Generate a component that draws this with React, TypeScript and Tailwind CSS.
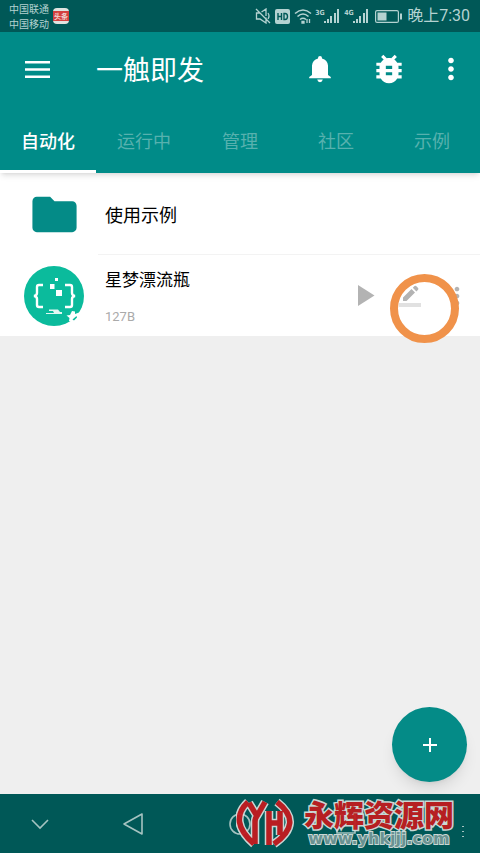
import { useState } from "react";
import { MdBugReport, MdFolder, MdMoreVert } from "react-icons/md";

const tabs = ["自动化", "运行中", "管理", "社区", "示例"];

function SignalIcon() {
  return (
    <svg width="16" height="16" viewBox="0 0 16 16" fill="currentColor">
      <path d="M0 13h2v2H0zM3 11h2v4H3zM6 8h2v7H6zM10 5h2v10h-2zM13 1h2v14h-2z" />
    </svg>
  );
}

function StatusBar() {
  return (
    <div className="flex h-8 items-center justify-between bg-[#005857] pl-[9px] pr-[10px] text-[#b4d2d1]">
      <div className="flex items-center gap-1">
        <div className="text-[10px] leading-[15px]">
          <p>中国联通</p>
          <p>中国移动</p>
        </div>
        <div className="flex h-4 w-4 items-center justify-center rounded-sm bg-[#dfe3e0]">
          <span className="w-4 bg-[#d4403f] text-center text-[7px] font-bold leading-[10px] text-[#f2d6d2]">
            头条
          </span>
        </div>
      </div>

      <div className="flex items-center">
        <svg width="16" height="16" viewBox="0 0 16 16" fill="none" stroke="currentColor" strokeWidth="1.3">
          <path d="M5 5H1.500v6H5l6 4V9.500M6.500 4L11 1v7M1 1l14 14M13 5q2 3 0 6" />
        </svg>
        <svg className="ml-1" width="15" height="15" viewBox="0 0 15 15">
          <rect width="15" height="15" rx="2" fill="currentColor" />
          <path
            d="M3 4v7M6.500 4v7M3 7.500h3.500M9 4.500v6h1q2.500 0 2.500-3t-2.500-3z"
            fill="none"
            stroke="#005857"
            strokeWidth="1.400"
          />
        </svg>
        <svg className="ml-1" width="18" height="16" viewBox="0 0 18 16" fill="none" stroke="currentColor" strokeWidth="1.600">
          <path d="M1 5.500q8-7 16 0M3.500 8.500q5.500-5 11 0M6 11.500q3-2.500 6 0" />
          <path d="M8 13.500h2v1.500H8zM13 11v4M15.500 11v4" strokeWidth="1.300" />
        </svg>
        <div className="ml-[3px] flex items-center">
          <span className="h-4 w-[9px] font-['DejaVu_Sans_Condensed',sans-serif] text-[7px] font-bold leading-[10px]">3G</span>
          <SignalIcon />
        </div>
        <div className="ml-1 flex items-center">
          <span className="h-4 w-[9px] font-['DejaVu_Sans_Condensed',sans-serif] text-[7px] font-bold leading-[10px]">4G</span>
          <SignalIcon />
        </div>
        <svg className="ml-[6px]" width="27" height="13" viewBox="0 0 27 13">
          <rect x=".6" y=".6" width="22.800" height="11.800" rx="1.500" fill="none" stroke="currentColor" strokeWidth="1.200" />
          <path d="M2.500 2.500h9v8h-9zM25 3.500h2v6h-2z" fill="currentColor" />
        </svg>
        <span className="ml-[5px] font-[Roboto,'Noto_Sans_CJK_SC',sans-serif] text-base leading-5">晚上7:30</span>
      </div>
    </div>
  );
}

function AppBar() {
  return (
    <div className="flex h-[74px] items-center pl-6 pr-3">
      <button type="button" aria-label="菜单">
        <svg width="27" height="19" viewBox="0 0 27 19" fill="currentColor">
          <path d="M1 1h25v2.500H1zM1 8.200h25v2.500H1zM1 15.400h25v2.500H1z" />
        </svg>
      </button>
      <h1 className="ml-[45px] flex-1 text-[27px] leading-9">一触即发</h1>
      <button type="button" aria-label="通知">
        <svg width="24" height="28" viewBox="0 0 24 28" fill="currentColor">
          <path d="M12 1a2 2 0 0 1 2 2v.5q5.500 1.500 6 7V20l2.800 2v1.200H1.200V22L4 20v-9.500q.5-5.500 6-7V3a2 2 0 0 1 2-2zM9.200 24.600h5.600q-.6 2.600-2.800 2.600t-2.800-2.600z" />
        </svg>
      </button>
      <button type="button" aria-label="日志" className="ml-[38px]">
        <MdBugReport size={38} />
      </button>
      <button type="button" aria-label="更多" className="ml-[26px]">
        <MdMoreVert size={34} />
      </button>
    </div>
  );
}

function ScriptIcon() {
  return (
    <svg width="60" height="60" viewBox="0 0 60 60">
      <circle cx="30" cy="30" r="30" fill="#0bbb9c" />
      <path
        d="M19 19h-4q-2 0-2 2v6q0 2.500-3 3 3 .5 3 3v6q0 2 2 2h4M41 19h5q2 0 2 2v6q0 2.500 3 3-3 .5-3 3v6q0 2-2 2h-5"
        fill="none"
        stroke="#fff"
        strokeWidth="2.400"
      />
      <path d="M31 12h3v3h-3zM26 18h4.500v5H26zM32 24h6v6h-6z" fill="#fff" />
      <path d="M25 43.500h9l2 2.500h2v2H22v-1h8l-1-2h-4z" fill="#e2f7f2" />
      <path
        d="M42.500 49.500l3.500-.5 2-4 3 .5v2.500l4-1.500L60 43v17H48v-4l-3-1 .5-3z"
        fill="#fff"
      />
      <path d="M48.500 53.500l4-3.500.500 1.500-3 3z" fill="#0bbb9c" />
    </svg>
  );
}

function ScriptList() {
  return (
    <ul className="bg-white text-black">
      <li className="flex h-[82px] items-center pl-6">
        <span className="flex w-[60px] justify-center">
          <MdFolder size={53} className="text-[#048b87]" />
        </span>
        <div className="ml-[14px] flex h-full flex-1 items-center border-b border-[#f3f3f3] pl-[7px] text-lg">
          使用示例
        </div>
      </li>
      <li className="relative flex h-[81px] items-center pl-6 pr-[9px]">
        <ScriptIcon />
        <div className="ml-[21px] flex-1">
          <p className="text-[17px] leading-6">星梦漂流瓶</p>
          <p className="mt-[18px] font-[Roboto,sans-serif] text-[13px] leading-4 text-[#aaa]">127B</p>
        </div>
        <button type="button" aria-label="运行" className="text-[#b3b3b3]">
          <svg width="18" height="22" viewBox="0 0 18 22" fill="currentColor">
            <path d="M1 0l16.500 10.500L1 21z" />
          </svg>
        </button>
        <button type="button" aria-label="编辑" className="ml-6">
          <svg width="24" height="24" viewBox="0 0 24 24">
            <path d="M4 13.500L12.500 5l3.500 3.500L7.500 17H4zM13.800 3.800l1.700-1.700q.8-.6 1.600 0l2 2q.6.800 0 1.600l-1.700 1.700z" fill="#b3b3b3" />
            <path d="M0 19h22v4H0z" fill="#e1e1e1" />
          </svg>
        </button>
        <button type="button" aria-label="更多操作" className="ml-5 text-[#b3b3b3]">
          <MdMoreVert size={28} />
        </button>
        <span className="pointer-events-none absolute right-[21px] top-[19px] z-10 h-[69px] w-[69px] rounded-full border-8 border-[#f0924a]" />
      </li>
    </ul>
  );
}

function Watermark() {
  const mark =
    "M12 5Q-8 24 18 47M13 6l8 13 8-14M21 19q-2 2-2 6v22M33 14v34M33 26h11M44 14v24M41 5Q68 26 38 47";

  return (
    <div className="pointer-events-none absolute bottom-1 right-[26px] flex items-center gap-2 opacity-95">
      <svg width="60" height="52" viewBox="0 0 60 52" fill="none" strokeLinejoin="round">
        <path d={mark} stroke="#d5dedc" strokeWidth="8.500" />
        <path d={mark} stroke="#c31b20" strokeWidth="5.500" />
      </svg>
      <div className="text-center">
        <p className="text-[30px] font-black leading-8 text-[#c01c20] [-webkit-text-stroke:3px_#d5dedc] [paint-order:stroke]">
          永辉资源网
        </p>
        <p className="font-['DejaVu_Sans',sans-serif] text-base font-bold leading-5 text-[#6f9695] [-webkit-text-stroke:2px_#d5dedc] [paint-order:stroke]">
          www.yhkjjj.com
        </p>
      </div>
    </div>
  );
}

function NavigationBar() {
  return (
    <nav className="relative flex h-[59px] items-center bg-[#005857] text-[#a5c3c1]">
      <button type="button" aria-label="隐藏" className="ml-[30px]">
        <svg width="20" height="12" viewBox="0 0 20 12" fill="none" stroke="currentColor" strokeWidth="1.600">
          <path d="M2 2l8 8 8-8" />
        </svg>
      </button>
      <button type="button" aria-label="返回" className="ml-[72px]">
        <svg width="22" height="24" viewBox="0 0 22 24" fill="none" stroke="currentColor" strokeWidth="1.600" strokeLinejoin="round">
          <path d="M20 2v20L2 12z" />
        </svg>
      </button>
      <button type="button" aria-label="主屏幕" className="ml-[84px]">
        <svg width="24" height="24" viewBox="0 0 24 24" fill="none" stroke="currentColor" strokeWidth="1.600">
          <circle cx="12" cy="12" r="10" />
        </svg>
      </button>
      <button type="button" aria-label="最近任务" className="ml-[84px]">
        <svg width="20" height="20" viewBox="0 0 20 20" fill="none" stroke="currentColor" strokeWidth="1.600">
          <path d="M1 1h18v18H1z" />
        </svg>
      </button>
      <button type="button" aria-label="选项" className="ml-auto mr-4 mt-4">
        <svg width="2" height="12" viewBox="0 0 2 12" fill="currentColor">
          <path d="M0 0h2v1H0zM0 5h2v1H0zM0 10h2v1H0z" />
        </svg>
      </button>
      <Watermark />
    </nav>
  );
}

export default function App() {
  const [active, setActive] = useState(0);

  return (
    <div className="flex min-h-screen flex-col bg-[#efefef] font-['Noto_Sans_CJK_SC',sans-serif]">
      <header className="relative z-10 bg-[#008b88] text-white shadow-md">
        <StatusBar />
        <AppBar />
        <div role="tablist" className="grid grid-cols-5">
          {tabs.map((tab, index) => (
            <button
              key={tab}
              type="button"
              role="tab"
              aria-selected={index === active}
              onClick={() => setActive(index)}
              className={`h-[67px] border-b-[3px] pt-1 text-lg ${
                index === active
                  ? "border-white font-medium text-white"
                  : "border-transparent text-[#57b1ae]"
              }`}
            >
              {tab}
            </button>
          ))}
        </div>
      </header>

      <main className="flex flex-1 flex-col">
        <ScriptList />
        <button
          type="button"
          aria-label="新建"
          className="mb-3 mr-[13px] mt-auto flex h-[75px] w-[75px] items-center justify-center self-end rounded-full bg-[#048b87] text-white shadow-lg"
        >
          <svg width="14" height="14" viewBox="0 0 14 14" fill="currentColor">
            <path d="M6 0h2v14H6zM0 6h14v2H0z" />
          </svg>
        </button>
      </main>

      <NavigationBar />
    </div>
  );
}
